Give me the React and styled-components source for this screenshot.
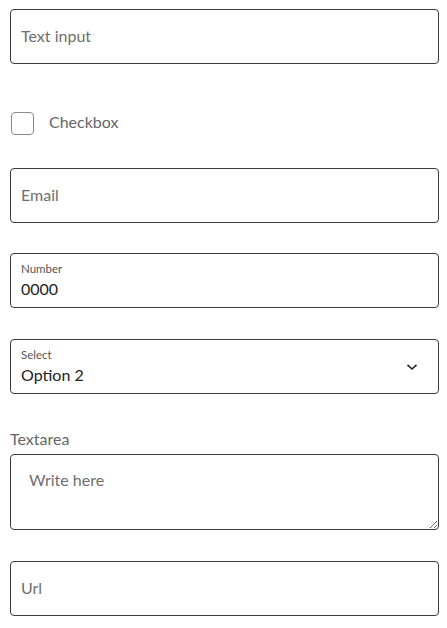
import React from "react";
import styled, { createGlobalStyle } from "styled-components";

const Global = createGlobalStyle`
  html, body { margin: 0; padding: 0; background: #fff; }
  body { font-family: "Lato", "Open Sans", sans-serif; }
  * { box-sizing: border-box; }
`;

const Form = styled.form`
  display: flex;
  flex-direction: column;
  padding: 9px 8px 20px 10px;
`;

const Box = styled.div`
  position: relative;
  height: 55px;
  margin-top: ${(p) => p.$mt || 0}px;
  border: 1px solid #3a3a3a;
  border-radius: 4px;
  display: flex;
  flex-direction: column;
  justify-content: center;
  padding: 0 10px;
`;

const TextInput = styled.input`
  border: none;
  outline: none;
  background: transparent;
  font-family: inherit;
  font-size: 16px;
  color: #222;
  padding: 0 0 3px 0;
  width: 100%;
  &::placeholder { color: #6e6e6e; opacity: 1; }
`;

const SmallLabel = styled.label`
  font-size: 11.5px;
  color: #555;
  line-height: 14px;
  margin-bottom: 3px;
`;

const ValueText = styled.span`
  font-size: 16px;
  color: #222;
  line-height: 20px;
`;

const CheckRow = styled.label`
  display: flex;
  align-items: center;
  gap: 15px;
  margin-top: 48px;
  height: 23px;
  font-size: 16px;
  color: #666;
`;

const CheckText = styled.span`
  padding-bottom: 4px;
`;

const CheckSquare = styled.span`
  width: 23px;
  height: 23px;
  margin-left: 1px;
  border: 1px solid #8a8a8a;
  border-radius: 4px;
  background: #fff;
`;

const Chevron = styled.svg`
  position: absolute;
  right: 20px;
  top: 50%;
  transform: translateY(-50%);
`;

const FieldLabel = styled.label`
  margin-top: 35px;
  font-size: 16px;
  color: #666;
  line-height: 20px;
  margin-bottom: 5px;
`;

const TextArea = styled.textarea`
  height: 76px;
  border: 1px solid #3a3a3a;
  border-radius: 4px;
  font-family: inherit;
  font-size: 16px;
  color: #222;
  padding: 15px 18px;
  outline: none;
  resize: vertical;
  &::placeholder { color: #6e6e6e; opacity: 1; }
`;

export default function App() {
  return (
    <>
      <Global />
      <Form>
        <Box>
          <TextInput placeholder="Text input" />
        </Box>
        <CheckRow>
          <CheckSquare />
          <CheckText>Checkbox</CheckText>
        </CheckRow>
        <Box $mt={33}>
          <TextInput type="email" placeholder="Email" />
        </Box>
        <Box $mt={30}>
          <SmallLabel>Number</SmallLabel>
          <ValueText>0000</ValueText>
        </Box>
        <Box $mt={31}>
          <SmallLabel>Select</SmallLabel>
          <ValueText>Option 2</ValueText>
          <Chevron width="12" height="8" viewBox="0 0 12 8">
            <path d="M1.5 1.8 L6 6 L10.5 1.8" fill="none" stroke="#222" strokeWidth="1.6" />
          </Chevron>
        </Box>
        <FieldLabel>Textarea</FieldLabel>
        <TextArea placeholder="Write here" />
        <Box $mt={31}>
          <TextInput placeholder="Url" />
        </Box>
      </Form>
    </>
  );
}
